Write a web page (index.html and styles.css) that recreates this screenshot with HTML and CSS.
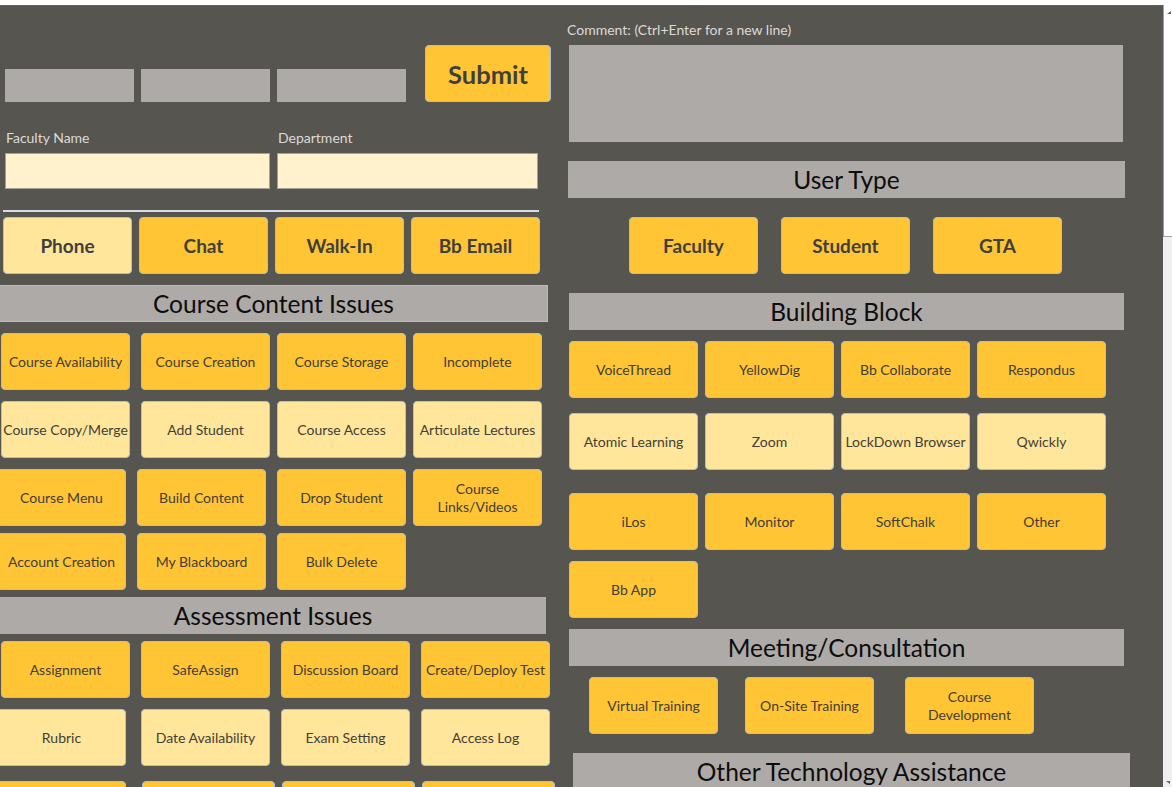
FILE: index.html
```html
<!DOCTYPE html>
<html lang="en">
<head>
    <meta charset="UTF-8">
    <meta name="viewport" content="width=device-width, initial-scale=1.0">
    <title>Help Desk Ticket Form</title>
    <link rel="stylesheet" href="styles.css">
</head>
<body>
    <div class="window">
        <div class="canvas">
            <div class="left">
                <div class="top-row">
                    <div class="grey-box"></div>
                    <div class="grey-box"></div>
                    <div class="grey-box"></div>
                    <button class="submit">Submit</button>
                </div>
                <div class="labels">
                    <span class="label name-label">Faculty Name</span>
                    <span class="label">Department</span>
                </div>
                <div class="inputs">
                    <input class="field field-name" type="text">
                    <input class="field field-dept" type="text">
                </div>
                <div class="rule"></div>

                <div class="btn-row contact-row">
                    <button class="btn big light">Phone</button>
                    <button class="btn big">Chat</button>
                    <button class="btn big">Walk-In</button>
                    <button class="btn big">Bb Email</button>
                </div>

                <div class="section-title course-title">Course Content Issues</div>
                <div class="btn-row row-a mt-11">
                    <button class="btn">Course Availability</button>
                    <button class="btn">Course Creation</button>
                    <button class="btn">Course Storage</button>
                    <button class="btn">Incomplete</button>
                </div>
                <div class="btn-row row-a mt-11">
                    <button class="btn light">Course Copy/Merge</button>
                    <button class="btn light">Add Student</button>
                    <button class="btn light">Course Access</button>
                    <button class="btn light">Articulate Lectures</button>
                </div>
                <div class="btn-row row-b mt-11">
                    <button class="btn">Course Menu</button>
                    <button class="btn">Build Content</button>
                    <button class="btn">Drop Student</button>
                    <button class="btn tight">Course<br>Links/Videos</button>
                </div>
                <div class="btn-row row-b mt-7">
                    <button class="btn">Account Creation</button>
                    <button class="btn">My Blackboard</button>
                    <button class="btn">Bulk Delete</button>
                </div>

                <div class="section-title assess-title">Assessment Issues</div>
                <div class="btn-row row-c mt-7">
                    <button class="btn">Assignment</button>
                    <button class="btn">SafeAssign</button>
                    <button class="btn">Discussion Board</button>
                    <button class="btn">Create/Deploy Test</button>
                </div>
                <div class="btn-row row-d mt-11">
                    <button class="btn light">Rubric</button>
                    <button class="btn light">Date Availability</button>
                    <button class="btn light">Exam Setting</button>
                    <button class="btn light">Access Log</button>
                </div>
                <div class="btn-row row-e mt-15">
                    <button class="btn"></button>
                    <button class="btn wide"></button>
                    <button class="btn wide"></button>
                    <button class="btn wide"></button>
                </div>
            </div>

            <div class="right">
                <span class="label comment-label">Comment: (Ctrl+Enter for a new line)</span>
                <textarea class="comment"></textarea>

                <div class="section-title user-title">User Type</div>
                <div class="btn-row user-row">
                    <button class="btn big">Faculty</button>
                    <button class="btn big">Student</button>
                    <button class="btn big">GTA</button>
                </div>

                <div class="section-title block-title">Building Block</div>
                <div class="btn-row block-row mt-11">
                    <button class="btn">VoiceThread</button>
                    <button class="btn">YellowDig</button>
                    <button class="btn">Bb Collaborate</button>
                    <button class="btn">Respondus</button>
                </div>
                <div class="btn-row block-row mt-15">
                    <button class="btn light">Atomic Learning</button>
                    <button class="btn light">Zoom</button>
                    <button class="btn light">LockDown Browser</button>
                    <button class="btn light">Qwickly</button>
                </div>
                <div class="btn-row block-row mt-23">
                    <button class="btn">iLos</button>
                    <button class="btn">Monitor</button>
                    <button class="btn">SoftChalk</button>
                    <button class="btn">Other</button>
                </div>
                <div class="btn-row block-row mt-11">
                    <button class="btn">Bb App</button>
                </div>

                <div class="section-title meeting-title">Meeting/Consultation</div>
                <div class="btn-row meeting-row">
                    <button class="btn">Virtual Training</button>
                    <button class="btn">On-Site Training</button>
                    <button class="btn">Course<br>Development</button>
                </div>

                <div class="section-title other-title">Other Technology Assistance</div>
            </div>
        </div>

        <div class="scrollbar">
            <div class="scroll-track">
                <span class="arrow-up"></span>
            </div>
            <span class="arrow-down"></span>
        </div>
    </div>
</body>
</html>
```

FILE: styles.css
```css
body {
    margin: 0;
    height: 787px;
    overflow: hidden;
    background-color: #ffffff;
    font-family: Lato, "Open Sans", sans-serif;
}
.window {
    display: flex;
    margin-top: 5px;
    height: 782px;
}
.canvas {
    display: flex;
    width: 1163px;
    flex-shrink: 0;
    background-color: #575550;
    border-top: 1px solid #a8403f;
    overflow: hidden;
}
.left {
    display: flex;
    flex-direction: column;
    width: 560px;
    flex-shrink: 0;
}
.right {
    display: flex;
    flex-direction: column;
    flex: 1;
}
.left > *,
.right > * {
    flex-shrink: 0;
}

/* top of the form */
.top-row {
    display: flex;
    align-items: flex-end;
    gap: 7px;
    margin: 39px 0 0 5px;
}
.grey-box {
    width: 129px;
    height: 33px;
    background-color: #aeaaa7;
}
.submit {
    width: 126px;
    height: 57px;
    margin-left: 12px;
    background-color: #ffc535;
    border: 1px solid #a4c2de;
    border-radius: 4px;
    font-family: inherit;
    font-size: 25.5px;
    font-weight: bold;
    color: #3f3f3f;
    padding: 0;
}
.label {
    font-size: 14px;
    line-height: 16px;
    color: #dcdad6;
}
.labels {
    display: flex;
    margin-top: 28px;
}
.name-label {
    width: 272px;
    margin-left: 6px;
}
.inputs {
    display: flex;
    gap: 7px;
    margin: 7px 0 0 5px;
}
.field {
    height: 36px;
    box-sizing: border-box;
    background-color: #fff2cc;
    border: 1px solid #a3a19c;
    margin: 0;
}
.field-name {
    width: 265px;
}
.field-dept {
    width: 261px;
}
.rule {
    width: 536px;
    height: 2px;
    margin: 21px 0 0 3px;
    background-color: #d6dbe4;
}

/* buttons */
.btn-row {
    display: flex;
    gap: 7px;
}
.btn {
    display: flex;
    align-items: center;
    justify-content: center;
    flex-shrink: 0;
    width: 129px;
    height: 57px;
    box-sizing: border-box;
    padding: 0;
    background-color: #ffc535;
    border: 1px solid #a4c2de;
    border-radius: 4px;
    font-family: inherit;
    font-size: 14px;
    line-height: 18px;
    color: #423e38;
    text-align: center;
}
.btn.light {
    background-color: #ffe69a;
}
.btn.big {
    font-size: 19px;
    font-weight: bold;
    color: #3f3f3f;
}
.btn.wide {
    width: 133px;
}
.contact-row {
    margin: 5px 0 0 3px;
}
.row-a {
    margin-left: 1px;
}
.row-a .btn:first-child {
    margin-right: 4px;
}
.row-b {
    gap: 11px;
    margin-left: -3px;
}
.row-b .tight {
    margin-left: -4px;
}
.row-c {
    gap: 11px;
    margin-left: 1px;
}
.row-d {
    gap: 11px;
    margin-left: -3px;
}
.row-d .btn:first-child {
    margin-right: 4px;
}
.row-e {
    margin-left: -3px;
}
.row-e .btn:first-child {
    margin-right: 9px;
}
.mt-7 {
    margin-top: 7px;
}
.mt-11 {
    margin-top: 11px;
}
.mt-15 {
    margin-top: 15px;
}
.mt-23 {
    margin-top: 23px;
}

/* section headers */
.section-title {
    height: 37px;
    box-sizing: border-box;
    background-color: #aeaaa7;
    font-size: 24.5px;
    line-height: 37px;
    color: #0d0d0d;
    text-align: center;
}
.course-title {
    width: 548px;
    margin-top: 11px;
    border: 1px solid #a4c2de;
    border-left: none;
    line-height: 35px;
}
.assess-title {
    width: 546px;
    margin-top: 7px;
}

/* right side */
.comment-label {
    margin: 16px 0 0 7px;
}
.comment {
    width: 554px;
    height: 97px;
    margin: 7px 0 0 9px;
    box-sizing: border-box;
    background-color: #aeaaa7;
    border: none;
    resize: none;
}
.user-title {
    width: 557px;
    margin: 19px 0 0 8px;
}
.user-row {
    gap: 23px;
    margin: 19px 0 0 69px;
}
.block-title {
    width: 555px;
    margin: 19px 0 0 9px;
}
.block-row {
    margin-left: 9px;
}
.meeting-title {
    width: 555px;
    margin: 11px 0 0 9px;
}
.meeting-row {
    gap: 27px;
    margin: 11px 0 0 29px;
}
.meeting-row .btn:last-child {
    margin-left: 4px;
}
.other-title {
    width: 557px;
    margin: 19px 0 0 13px;
}

/* scrollbar strip */
.scrollbar {
    display: flex;
    flex-direction: column;
    flex: 1;
    background-color: #f0f0f0;
}
.scroll-track {
    height: 232px;
    box-sizing: border-box;
    background-color: #ffffff;
    border-left: 1px solid #a0a0a0;
    border-bottom: 1px solid #a0a0a0;
    padding: 6px 0 0 3px;
}
.arrow-up {
    display: block;
    width: 0;
    height: 0;
    border-left: 4px solid transparent;
    border-bottom: 3px solid #606060;
}
.arrow-down {
    display: block;
    width: 0;
    height: 0;
    margin: auto 0 3px 3px;
    border-left: 4px solid transparent;
    border-top: 3px solid #606060;
}
```
